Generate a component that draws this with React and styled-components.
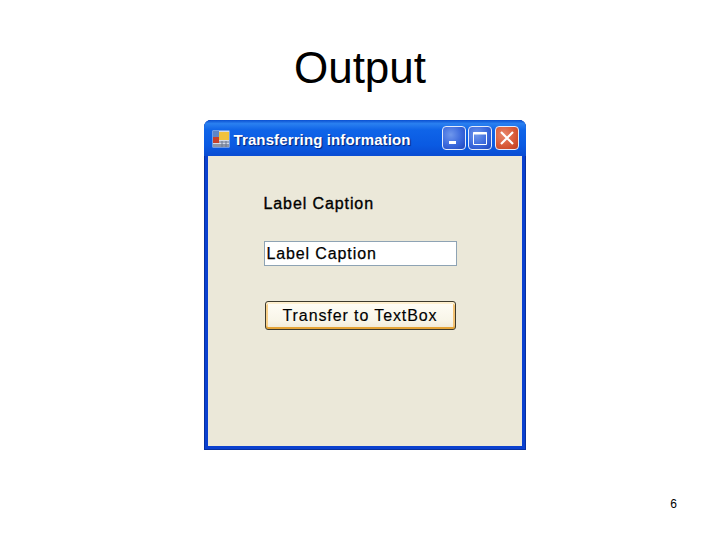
import React from "react";
import styled, { createGlobalStyle } from "styled-components";

const GlobalStyle = createGlobalStyle`
  html, body {
    margin: 0;
    padding: 0;
    background: #fff;
    font-family: "Liberation Sans", Arial, sans-serif;
  }
`;

const Slide = styled.div`
  width: 720px;
  height: 540px;
  display: flex;
  flex-direction: column;
  align-items: center;
  overflow: hidden;
`;

const Heading = styled.h1`
  margin: 42px 0 0;
  height: 78px;
  font-size: 44px;
  line-height: 51px;
  font-weight: 400;
  color: #000;
`;

const Window = styled.div`
  width: 322px;
  height: 330px;
  box-sizing: border-box;
  margin-left: 9px;
  display: flex;
  flex-direction: column;
  padding: 0 4px 4px;
  border-radius: 7px 7px 0 0;
  background: #0a40cf;
  box-shadow: inset 0 0 0 1px #07309f;
`;

const TitleBar = styled.div`
  height: 34px;
  flex: none;
  display: flex;
  align-items: center;
  margin: 0 -4px;
  padding: 2px 7px 0 8px;
  border-radius: 7px 7px 0 0;
  background: linear-gradient(180deg, #0a4fd0 0%, #2a80f0 10%, #0f64e8 28%, #0a5ae2 70%, #0a4cd2 100%);
`;

const AppIcon = styled.svg`
  width: 18px;
  height: 18px;
  flex: none;
`;

const TitleText = styled.span`
  margin-left: 4px;
  flex: 1;
  font-family: "Liberation Sans", Arial, sans-serif;
  font-size: 15px;
  font-weight: 700;
  letter-spacing: 0.12px;
  color: #fff;
  text-shadow: 1px 1px 1px #02237a;
`;

const Controls = styled.div`
  display: flex;
  gap: 2.5px;
  margin-top: -2px;
`;

const ControlButton = styled.div`
  width: 24px;
  height: 24px;
  box-sizing: border-box;
  display: flex;
  align-items: center;
  justify-content: center;
  border: 1px solid #e4ecfb;
  border-radius: 4px;
  background: ${(p) =>
    p.$close
      ? "radial-gradient(circle at 35% 35%, #e8876b 0%, #d85a38 55%, #bf3c1e 100%)"
      : "radial-gradient(circle at 35% 35%, #6f97ec 0%, #3a68dc 55%, #1f47bd 100%)"};
`;

const ControlGlyph = styled.svg`
  width: 18px;
  height: 18px;
  display: block;
`;

const Client = styled.div`
  flex: 1;
  display: flex;
  flex-direction: column;
  align-items: flex-start;
  padding: 38px 0 0 56px;
  background: #ebe8d9;
`;

const FormLabel = styled.div`
  font-family: "Liberation Sans", Arial, sans-serif;
  font-size: 16px;
  line-height: 20px;
  font-weight: 400;
  letter-spacing: 0.9px;
  color: #000;
  -webkit-text-stroke: 0.35px #000;
`;

const TextBox = styled.div`
  margin-top: 27px;
  width: 193px;
  height: 25px;
  box-sizing: border-box;
  padding-left: 2px;
  display: flex;
  align-items: center;
  background: #fff;
  border: 1px solid #8ea3b4;
  font-size: 16px;
  letter-spacing: 0.88px;
  color: #000;
  -webkit-text-stroke: 0.25px #000;
`;

const PushButton = styled.div`
  margin: 35px 0 0 1px;
  width: 191px;
  height: 29px;
  box-sizing: border-box;
  display: flex;
  align-items: center;
  justify-content: center;
  border: 1px solid #3d3a2c;
  border-radius: 3px;
  background: linear-gradient(180deg, #fffdf6 0%, #f8f5e8 70%, #efe9d6 100%);
  box-shadow: inset 0 2px 0 #fff0cf, inset 0 -2px 0 #e5a437, inset 2px 0 0 #f8d08a, inset -2px 0 0 #f3c274;
  font-size: 16px;
  letter-spacing: 0.9px;
  color: #000;
  -webkit-text-stroke: 0.15px #000;
`;

const Footer = styled.div`
  align-self: stretch;
  margin-top: 45px;
  padding-right: 43px;
  text-align: right;
  font-size: 12px;
  line-height: 18px;
  color: #000;
`;

export default function App() {
  return (
    <>
      <GlobalStyle />
      <Slide>
        <Heading>Output</Heading>
        <Window>
          <TitleBar>
            <AppIcon viewBox="0 0 18 18">
              <rect x="0.5" y="0.5" width="17" height="17" fill="#d4dbe8" />
              <rect x="1" y="1" width="6" height="6" fill="#5f86c6" />
              <rect x="7" y="2" width="10" height="8" fill="#f2c23c" />
              <rect x="1" y="7" width="6" height="6" fill="#c8402a" />
              <rect x="1" y="14" width="16" height="3" fill="#8d96a8" />
              <path d="M7 12h10M10 11v6M14 11v6" stroke="#6d7890" strokeWidth="1" />
            </AppIcon>
            <TitleText>Transferring information</TitleText>
            <Controls>
              <ControlButton>
                <ControlGlyph viewBox="0 0 18 18">
                  <rect x="4" y="12" width="7" height="3" fill="#fff" />
                </ControlGlyph>
              </ControlButton>
              <ControlButton>
                <ControlGlyph viewBox="0 0 18 18">
                  <path d="M2.5 3.5h13v12h-13z" fill="none" stroke="#fff" strokeWidth="1" />
                  <rect x="2.5" y="3" width="13" height="2.5" fill="#fff" />
                </ControlGlyph>
              </ControlButton>
              <ControlButton $close>
                <ControlGlyph viewBox="0 0 18 18">
                  <path d="M3 3l12 12M15 3L3 15" stroke="#fff" strokeWidth="2.2" />
                </ControlGlyph>
              </ControlButton>
            </Controls>
          </TitleBar>
          <Client>
            <FormLabel>Label Caption</FormLabel>
            <TextBox>Label Caption</TextBox>
            <PushButton>Transfer to TextBox</PushButton>
          </Client>
        </Window>
        <Footer>6</Footer>
      </Slide>
    </>
  );
}
